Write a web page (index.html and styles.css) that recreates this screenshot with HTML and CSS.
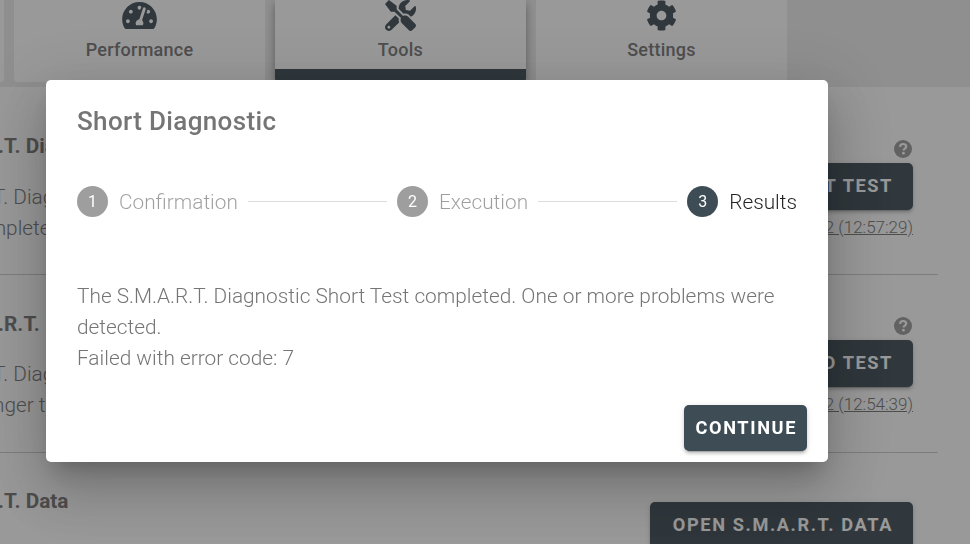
FILE: index.html
```html
<!DOCTYPE html>
<html lang="en">
<head>
    <meta charset="UTF-8">
    <meta name="viewport" content="width=device-width, initial-scale=1.0">
    <title>Short Diagnostic</title>
    <link rel="stylesheet" href="styles.css">
</head>
<body>
    <svg class="sprite">
        <symbol id="help" viewBox="0 0 18 18">
            <circle cx="9" cy="9" r="9" fill="#999"/>
            <path d="M6 6.9C6.1 5 7.3 4 9.1 4c1.8 0 3.1 1 3.1 2.6 0 2-2.6 2.1-2.6 3.9" fill="none" stroke="#fff" stroke-width="2.2"/>
            <circle cx="9.4" cy="13.2" r="1.4" fill="#fff"/>
        </symbol>
    </svg>

    <div class="page">
        <nav class="tabs">
            <div class="tab"></div>
            <div class="tab">
                <svg class="icon-gauge" viewBox="0 32 576 448"><path d="M288 32C128.94 32 0 160.94 0 320c0 52.8 14.25 102.26 39.06 144.8 5.61 9.62 16.3 15.2 27.44 15.2h443c11.14 0 21.83-5.58 27.44-15.2C561.75 422.26 576 372.8 576 320c0-159.06-128.94-288-288-288zm0 64c14.71 0 26.58 10.13 30.32 23.65-1.11 2.26-2.64 4.23-3.45 6.67l-9.22 27.67c-5.13 3.49-10.97 6.01-17.64 6.01-17.67 0-32-14.33-32-32S270.33 96 288 96zM96 384c-17.67 0-32-14.33-32-32s14.33-32 32-32 32 14.33 32 32-14.33 32-32 32zm48-160c-17.67 0-32-14.33-32-32s14.33-32 32-32 32 14.33 32 32-14.33 32-32 32zm246.77-72.41l-61.33 184C343.13 347.33 352 364.54 352 384c0 11.72-3.38 22.55-8.88 32H232.88c-5.5-9.45-8.88-20.28-8.88-32 0-33.94 26.5-61.43 59.9-63.59l61.34-184.01c4.17-12.56 17.73-19.45 30.36-15.17 12.57 4.19 19.35 17.79 15.17 30.36zm14.66 57.2l15.52-46.55c3.47-1.29 7.13-2.23 11.05-2.23 17.67 0 32 14.33 32 32s-14.33 32-32 32c-11.38-.01-20.89-6.28-26.57-15.22zM480 384c-17.67 0-32-14.33-32-32s14.33-32 32-32 32 14.33 32 32-14.33 32-32 32z"/></svg>
                <span>Performance</span>
            </div>
            <div class="tab active">
                <svg class="icon-tools" viewBox="0 0 512 512"><path d="M501.1 395.7L384 278.6c-23.1-23.1-57.6-27.6-85.4-13.9L192 158.1V96L64 0 0 64l96 128h62.1l106.6 106.6c-13.6 27.8-9.2 62.3 13.9 85.4l117.1 117.1c14.6 14.6 38.2 14.6 52.7 0l52.7-52.7c14.5-14.6 14.5-38.2 0-52.7zM331.7 225c28.3 0 54.9 11 74.9 31l19.4 19.4c15.8-6.9 30.8-16.5 43.8-29.5 37.1-37.1 49.7-89.3 37.9-136.7-2.2-9-13.5-12.1-20.1-5.5l-74.4 74.4-67.9-11.3L334 98.9l74.4-74.4c6.6-6.6 3.4-17.9-5.7-20.2-47.4-11.7-99.6.9-136.6 37.9-28.5 28.5-41.9 66.1-41.2 103.6l82.1 82.1c8.1-1.9 16.5-2.9 24.7-2.9zm-103.9 82l-56.7-56.7L18.7 402.8c-25 25-25 65.5 0 90.5s65.5 25 90.5 0l123.6-123.6c-7.6-19.9-9.9-41.6-5-62.7zM64 472c-13.2 0-24-10.8-24-24 0-13.3 10.7-24 24-24s24 10.7 24 24c0 13.2-10.7 24-24 24z"/></svg>
                <span>Tools</span>
            </div>
            <div class="tab">
                <svg class="icon-cog" viewBox="0 0 512 512"><path d="M487.4 315.7l-42.6-24.6c4.3-23.2 4.3-47 0-70.2l42.6-24.6c4.9-2.8 7.1-8.6 5.5-14-11.1-35.6-30-67.8-54.7-94.6-3.8-4.1-10-5.1-14.8-2.3L380.8 110c-17.9-15.4-38.5-27.3-60.8-35.1V25.8c0-5.6-3.9-10.5-9.4-11.7-36.7-8.2-74.3-7.8-109.2 0-5.5 1.2-9.4 6.1-9.4 11.7V75c-22.2 7.9-42.8 19.8-60.8 35.1L88.7 85.5c-4.9-2.8-11-1.9-14.8 2.3-24.7 26.7-43.6 58.9-54.7 94.6-1.7 5.4.6 11.2 5.5 14L67.3 221c-4.3 23.2-4.3 47 0 70.2l-42.6 24.6c-4.9 2.8-7.1 8.6-5.5 14 11.1 35.6 30 67.8 54.7 94.6 3.8 4.1 10 5.1 14.8 2.3l42.6-24.6c17.9 15.4 38.5 27.3 60.8 35.1v49.2c0 5.6 3.9 10.5 9.4 11.7 36.7 8.2 74.3 7.8 109.2 0 5.5-1.2 9.4-6.1 9.4-11.7v-49.2c22.2-7.9 42.8-19.8 60.8-35.1l42.6 24.6c4.9 2.8 11 1.9 14.8-2.3 24.7-26.7 43.6-58.9 54.7-94.6 1.5-5.5-.7-11.3-5.6-14.1zM256 336c-44.1 0-80-35.9-80-80s35.9-80 80-80 80 35.9 80 80-35.9 80-80 80z"/></svg>
                <span>Settings</span>
            </div>
        </nav>

        <main class="content">
            <section class="row">
                <div class="info">
                    <h3>.T. Diag</h3>
                    <p>T. Diag<br><span class="outdent">ompletes</span></p>
                </div>
                <div class="actions">
                    <svg class="help"><use href="#help"/></svg>
                    <button class="btn">START TEST</button>
                    <a class="last-run">2 (12:57:29)</a>
                </div>
            </section>
            <section class="row extended">
                <div class="info">
                    <h3>.R.T.</h3>
                    <p>T. Diag<br>nger t</p>
                </div>
                <div class="actions">
                    <svg class="help"><use href="#help"/></svg>
                    <button class="btn">EXTENDED TEST</button>
                    <a class="last-run">2 (12:54:39)</a>
                </div>
            </section>
            <section class="row data">
                <div class="info">
                    <h3>.T. Data</h3>
                </div>
                <div class="actions">
                    <button class="btn">OPEN S.M.A.R.T. DATA</button>
                </div>
            </section>
        </main>
    </div>

    <div class="overlay">
        <div class="dialog">
            <h2>Short Diagnostic</h2>
            <div class="stepper">
                <div class="step"><span class="num">1</span>Confirmation</div>
                <hr>
                <div class="step"><span class="num">2</span>Execution</div>
                <hr>
                <div class="step current"><span class="num">3</span>Results</div>
            </div>
            <p class="message">The S.M.A.R.T. Diagnostic Short Test completed. One or more problems were detected.<br>Failed with error code: 7</p>
            <button class="btn continue">CONTINUE</button>
        </div>
    </div>
</body>
</html>
```
FILE: styles.css
```css
* {
    box-sizing: border-box;
}
body {
    margin: 0;
    height: 544px;
    overflow: hidden;
    font-family: Roboto, sans-serif;
    color: #757575;
}
h2, h3, p {
    margin: 0;
}
.sprite {
    display: none;
}
.page {
    height: 544px;
    overflow: hidden;
    background: #fff;
}
.tabs {
    display: flex;
    gap: 10px;
    height: 87px;
    margin-left: -247px;
    background: #ededed;
}
.tab {
    display: flex;
    flex: none;
    flex-direction: column;
    align-items: center;
    width: 251px;
    height: 82px;
    border-radius: 0 0 4px 4px;
    background: #fff;
    font-size: 18px;
    font-weight: 500;
    letter-spacing: 0.25px;
    line-height: 24px;
}
.tab span {
    margin-top: auto;
    margin-bottom: 20px;
}
.tab svg {
    flex: none;
    fill: #3d4c55;
}
.tab.active {
    border-bottom: 13px solid #3d4c55;
    box-shadow: 0 4px 10px rgba(0, 0, 0, 0.4);
}
.tab.active span {
    margin-bottom: 7px;
}
.icon-gauge {
    width: 35px;
    height: 27px;
    margin-top: 2px;
}
.icon-tools {
    width: 31px;
    height: 31px;
}
.icon-cog {
    width: 31px;
    height: 31px;
}
.content {
    padding-top: 10px;
}
.row {
    display: flex;
    justify-content: space-between;
    width: 938px;
    height: 178px;
    padding-right: 25px;
    border-bottom: 1px solid #ccc;
}
.info {
    padding-top: 34px;
    margin-left: -2px;
    white-space: nowrap;
}
.info h3 {
    font-size: 20.8px;
    font-weight: 700;
    line-height: 30px;
}
.info p {
    padding-top: 21px;
    margin-left: -5px;
    font-size: 20.8px;
    font-weight: 300;
    line-height: 31px;
}
.outdent {
    margin-left: -17px;
}
.actions {
    display: flex;
    flex-direction: column;
    align-items: flex-end;
    padding-top: 43px;
}
.extended .info p {
    padding-top: 20px;
}
.extended .actions {
    padding-top: 42px;
}
.data .info {
    padding-top: 33px;
}
.data .actions {
    padding-top: 49px;
}
.help {
    width: 18px;
    height: 18px;
    margin-right: 1px;
    margin-bottom: 5px;
}
.btn {
    flex: none;
    height: 47px;
    padding: 0 20px 2px 23px;
    border: 0;
    border-radius: 5px;
    background: #3d4c55;
    box-shadow: 0 4px 1px -3px rgba(0, 0, 0, 0.2), 0 3px 3px rgba(0, 0, 0, 0.14), 0 1px 6px rgba(0, 0, 0, 0.12);
    color: #fff;
    font-family: inherit;
    font-size: 18.2px;
    font-weight: 700;
    letter-spacing: 1.6px;
}
.last-run {
    margin-top: 7px;
    font-size: 17px;
    font-weight: 300;
    line-height: 20px;
    text-decoration: underline;
}
.overlay {
    position: fixed;
    inset: 0;
    padding: 80px 0 0 46px;
    background: rgba(33, 33, 33, 0.46);
}
.dialog {
    display: flex;
    flex-direction: column;
    width: 782px;
    height: 382px;
    padding: 0 21px 11px 31px;
    border-radius: 5px;
    background: #fff;
    box-shadow: 0 14px 20px -9px rgba(0, 0, 0, 0.2), 0 31px 49px 4px rgba(0, 0, 0, 0.14), 0 12px 60px 10px rgba(0, 0, 0, 0.12);
}
.dialog h2 {
    padding-top: 21px;
    font-size: 26px;
    font-weight: 500;
    letter-spacing: 0.35px;
    line-height: 41px;
}
.stepper {
    display: flex;
    align-items: center;
    height: 31px;
    margin: 44px 10px 0 0;
}
.step {
    display: flex;
    align-items: center;
    font-size: 20.8px;
    font-weight: 300;
    color: rgba(0, 0, 0, 0.38);
}
.num {
    display: flex;
    align-items: center;
    justify-content: center;
    width: 31px;
    height: 31px;
    margin-right: 11px;
    border-radius: 50%;
    background: #9e9e9e;
    color: #fff;
    font-size: 16px;
    font-weight: 400;
}
.current {
    color: rgba(0, 0, 0, 0.87);
}
.current .num {
    background: #3d4c55;
}
.stepper hr {
    flex: 1;
    margin: 0 10px;
    border: 0;
    border-top: 1px solid #dcdcdc;
}
.message {
    margin-top: 64px;
    font-size: 20.84px;
    font-weight: 300;
    line-height: 31px;
}
.continue {
    align-self: flex-end;
    height: 46px;
    margin-top: auto;
    padding: 0 10px 2px 12px;
}
```
